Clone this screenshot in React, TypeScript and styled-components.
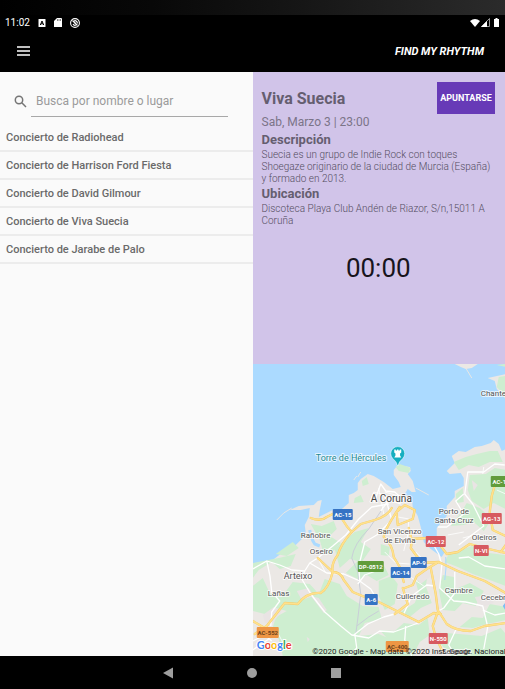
import React from 'react';
import styled, { createGlobalStyle } from 'styled-components';

const GlobalStyle = createGlobalStyle`
  * { box-sizing: border-box; }
  body { margin: 0; background: #000; font-family: Roboto, "Noto Sans", sans-serif; }
  h1, h2, p, ul { margin: 0; padding: 0; }
  button { font-family: inherit; border: 0; padding: 0; cursor: pointer; }
  svg { display: block; }
`;

const Screen = styled.div`
  display: flex;
  flex-direction: column;
  min-height: 100vh;
  background: #000;
`;

const TopEdge = styled.div`
  height: 15px;
  background: linear-gradient(90deg, #000 0%, #080808 30%, #161616 60%, #2b2b2b 100%);
`;

const StatusBar = styled.div`
  display: flex;
  align-items: center;
  justify-content: space-between;
  height: 15px;
  padding: 0 4px 0 5px;
  color: #fff;
`;

const StatusGroup = styled.div<{ $gap: number }>`
  display: flex;
  align-items: center;
  gap: ${(p) => p.$gap}px;
`;

const Clock = styled.time`
  font-size: 10px;
  line-height: 15px;
`;

const AppBar = styled.header`
  display: flex;
  align-items: center;
  justify-content: space-between;
  height: 42px;
  padding: 0 21px 0 16px;
`;

const IconButton = styled.button`
  background: none;
  color: #fff;
`;

const Brand = styled.a`
  color: #fff;
  font-size: 11px;
  font-weight: 700;
  font-style: italic;
  text-decoration: none;
`;

const Panes = styled.main`
  flex: 1;
  display: grid;
  grid-template-columns: 1fr 1fr;
`;

const ListPane = styled.section`
  background: #fafafa;
`;

const SearchForm = styled.form`
  display: flex;
  align-items: center;
  gap: 4px;
  height: 52px;
  padding: 6px 25px 0 14px;
`;

const SearchLabel = styled.label`
  flex: none;
  color: #757575;
`;

const SearchInput = styled.input`
  flex: 1;
  min-width: 0;
  height: 31px;
  padding: 0 5px;
  border: 0;
  border-bottom: 1px solid #a8a8a8;
  background: transparent;
  font-family: inherit;
  font-size: 12px;
  color: #333;
  outline: 0;
  &::placeholder { color: #9b9b9b; opacity: 1; }
`;

const ConcertList = styled.ul`
  list-style: none;
`;

const Concert = styled.li`
  height: 28px;
  padding: 0 6px;
  border-bottom: 2px solid #ececec;
  color: #6a6a6a;
  font-size: 11px;
  font-weight: 500;
  line-height: 28px;
`;

const DetailPane = styled.section`
  display: grid;
  grid-template-rows: minmax(0, 1fr) minmax(0, 1fr);
`;

const Info = styled.article`
  padding: 10px 10px 10px 9px;
  background: #d1c4e9;
  color: #544d5f;
`;

const TitleRow = styled.div`
  display: flex;
  align-items: center;
  justify-content: space-between;
`;

const Title = styled.h1`
  color: #655e70;
  font-size: 16px;
  font-weight: 700;
`;

const JoinButton = styled.button`
  width: 58px;
  height: 32px;
  background: #673ab7;
  color: #fff;
  font-size: 9px;
  font-weight: 700;
`;

const When = styled.p`
  color: #7b7488;
  font-size: 12px;
  line-height: 17px;
`;

const Subtitle = styled.h2`
  color: #655e70;
  font-size: 13px;
  font-weight: 700;
  line-height: 17px;
`;

const Copy = styled.p`
  padding-top: 1px;
  font-size: 10px;
  font-weight: 300;
  line-height: 12px;
`;

const Timer = styled.p`
  margin-top: 26px;
  color: #17141c;
  font-size: 26px;
  line-height: 30px;
  text-align: center;
`;

const MapCanvas = styled.svg`
  width: 100%;
  height: 0;
  min-height: 100%;
  background: #abdaff;
`;

const NavBar = styled.nav`
  display: flex;
  align-items: center;
  justify-content: center;
  gap: 72px;
  height: 33px;
  padding-right: 2px;
  color: #9e9e9e;
`;

const concerts = [
  'Concierto de Radiohead',
  'Concierto de Harrison Ford Fiesta',
  'Concierto de David Gilmour',
  'Concierto de Viva Suecia',
  'Concierto de Jarabe de Palo',
];

type Place = { x: number; y: number; text: string; size?: number; color?: string };

const places: Place[] = [
  { x: 63, y: 97, text: 'Torre de Hércules', size: 9, color: '#1f8a93' },
  { x: 118, y: 138, text: 'A Coruña', size: 10, color: '#444' },
  { x: 228, y: 32, text: 'Chanteiro' },
  { x: 48, y: 174, text: 'Rañobre' },
  { x: 57, y: 190, text: 'Oseiro' },
  { x: 31, y: 215, text: 'Arteixo', size: 9 },
  { x: 15, y: 232, text: 'Lañas' },
  { x: 125, y: 170, text: 'San Vicenzo' },
  { x: 131, y: 179, text: 'de Elviña' },
  { x: 186, y: 150, text: 'Porto de' },
  { x: 182, y: 159, text: 'Santa Cruz' },
  { x: 219, y: 176, text: 'Oleiros' },
  { x: 192, y: 229, text: 'Cambre' },
  { x: 228, y: 236, text: 'Cecebre' },
  { x: 143, y: 235, text: 'Culleredo' },
  { x: 189, y: 290, text: 'Sergude' },
];

type Shield = { x: number; y: number; w: number; text: string; fill: string; color?: string };

const shields: Shield[] = [
  { x: 80, y: 145, w: 20, text: 'AC-15', fill: '#3573c4' },
  { x: 238, y: 112, w: 24, text: 'AC-161', fill: '#619c3b' },
  { x: 229, y: 149, w: 20, text: 'AG-13', fill: '#d75a60' },
  { x: 173, y: 172, w: 20, text: 'AC-12', fill: '#d75a60' },
  { x: 221, y: 181, w: 15, text: 'N-VI', fill: '#d75a60' },
  { x: 158, y: 193, w: 16, text: 'AP-9', fill: '#3573c4' },
  { x: 138, y: 203, w: 20, text: 'AC-14', fill: '#3573c4' },
  { x: 105, y: 197, w: 26, text: 'DP-0512', fill: '#619c3b' },
  { x: 112, y: 230, w: 13, text: 'A-6', fill: '#3573c4' },
  { x: 176, y: 269, w: 19, text: 'N-550', fill: '#d75a60' },
  { x: 4, y: 263, w: 22, text: 'AC-552', fill: '#ee9644', color: '#6b431c' },
  { x: 133, y: 277, w: 23, text: 'AC-400', fill: '#ee9644', color: '#6b431c' },
];

const mainRoads = [
  'M58 154 Q68 158 74 153 L82 149',
  'M90 156 Q94 163 99 168 Q88 180 85 191 Q78 200 80 208 Q76 224 68 229 Q54 228 45 240 L32 239 L14 262 L2 270',
  'M0 257 L12 264',
  'M65 194 L80 208 Q88 208 91 216 L100 228 L112 233 L126 238 L146 248 L166 258 L181 249 L188 250',
  'M99 168 L108 160 L122 156 Q135 152 139 144',
  'M145 147 L152 141 L162 146 L160 155 L145 161 L144 150',
  'M147 143 Q132 165 131 173 Q140 181 141 193 L147 203 L151 218',
  'M156 164 Q160 177 158 184 L169 199 L186 198 L205 207 L232 217 L253 229',
  'M152 224 L160 221 L164 212 L174 205 L184 199',
  'M150 224 L155 240 L142 250',
  'M178 204 L183 230 L185 246 L194 260 Q203 267 218 267 L232 262 L253 259',
  'M185 248 L180 262 L183 273 L190 288',
  'M184 177 L194 190 L205 188 L217 180 L232 184 L253 189',
  'M244 114 L239 132 L237 148 L240 166 L253 172',
  'M158 175 L174 174 L186 179',
  'M248 188 L253 181',
];

const minorRoads = [
  'M0 205 L14 197 L27 201 L39 206 L52 207 L57 199 L65 194 L80 182 L93 171 L106 155 L119 143 L136 140',
  'M14 197 Q18 212 19 228 L27 237 L19 248 L18 262',
  'M52 207 L49 215 L58 230 L72 248 L88 262 L99 271 L116 274 L127 267 L141 268 L168 258',
  'M57 199 L74 209 L91 210 L107 217 L118 225 L125 237',
  'M107 217 L106 202 L112 178 L124 171',
  'M126 206 L112 211 L105 220',
  'M102 270 L104 284 L96 292',
  'M252 101 L242 100 L231 108 L215 108 L212 130 L220 140 L231 162 L219 171 L206 181',
  'M211 130 L203 137 L211 150 L194 163 L185 163',
  'M178 176 L186 190 L189 201 L187 224 L201 237 L213 238 L230 242 L235 263 L231 285',
  'M202 208 L202 229 L191 244 L184 248',
  'M253 205 L232 202 L216 193 L206 194',
  'M203 266 L196 281 L203 292',
  'M151 250 L159 232 L174 221 L182 222',
  'M142 250 L131 253 L115 260 L101 271',
  'M153 262 L152 276 L159 292',
  'M121 139 L128 120 L133 127 L142 128 L151 136',
  'M128 147 L136 136 L148 140 M132 131 L139 156 L124 171',
  'M230 246 L242 251 L253 249',
  'M0 277 L12 271 L19 277 M0 286 L16 275',
];

const woods = [
  'M0 199 L26 194 L43 190 L38 202 L27 205 L19 198 L6 206 L0 214 Z',
  'M23 190 L40 178 L46 184 L34 192 Z',
  'M0 222 L10 214 L17 229 L29 233 L40 218 L57 220 L66 230 L72 215 L87 220 L94 232 L110 242 L126 243 L129 255 L112 259 L106 272 L126 270 L140 276 L150 292 L30 292 L26 275 L19 267 L23 253 L34 247 L23 244 L12 250 L0 247 Z',
  'M58 160 L69 162 L81 157 L84 165 L77 172 L88 179 L78 190 L71 190 L67 176 Z',
  'M82 185 L102 168 L116 164 L108 178 L118 185 L109 198 L97 195 L87 204 Z',
  'M93 209 L105 197 L129 197 L136 211 L124 217 L114 211 L107 216 Z',
  'M213 93 L224 90 L237 87 L245 87 L250 98 L237 98 L226 103 L216 101 L206 106 L201 98 Z',
  'M217 111 L233 110 L242 104 L253 106 L253 145 L241 139 L231 145 L219 137 L215 126 Z',
  'M203 130 L210 124 L211 138 L204 139 Z',
  'M214 139 L227 144 L239 155 L231 167 L221 158 L211 161 L198 162 L208 149 Z',
  'M206 187 L219 182 L236 189 L253 191 L253 222 L237 216 L220 210 L205 203 L192 198 L196 190 Z',
  'M163 218 L175 210 L173 222 L179 239 L168 244 L157 253 L148 248 L162 239 L166 229 Z',
  'M190 211 L201 213 L203 225 L217 219 L231 227 L223 242 L210 239 L202 247 L190 246 L186 226 Z',
  'M237 240 L253 243 L253 256 L234 260 L220 264 L207 263 L219 253 L230 254 Z',
  'M193 269 L206 270 L229 272 L248 264 L253 270 L253 292 L199 292 L188 280 Z',
  'M127 266 L142 267 L151 259 L166 261 L175 254 L177 271 L167 278 L160 292 L150 292 Z',
  'M126 217 L139 212 L145 220 L142 240 L132 246 L126 232 Z',
  'M128 180 L137 183 L136 192 L128 191 Z',
];

function CityMap() {
  return (
    <MapCanvas viewBox="0 0 253 292" preserveAspectRatio="xMidYMid slice" role="img" aria-label="Mapa de A Coruña">
      <rect width="253" height="292" fill="#abdaff" />
      <path
        fill="#ebe8e5"
        d="M0 199 L12 199 L20 196 L29 189 L35 185 L43 181 L49 175 L53 169 L52 161 L56 153 L57 144 L48 146 L37 146 L46 142 L61 141 L65 137 L69 136 L67 146 L66 153 L74 149 L80 146 L88 146 L96 139 L96 131 L101 129 L105 126 L105 119 L108 115 L115 110 L121 112 L126 115 L131 118 L140 125 L148 123 L146 118 L141 111 L141 106 L145 101 L157 103 L158 107 L155 110 L160 117 L163 128 L159 128 L155 125 L152 130 L159 134 L160 143 L165 152 L168 163 L170 173 L171 178 L178 185 L189 193 L192 188 L188 182 L193 177 L184 173 L184 164 L189 158 L194 152 L194 142 L202 133 L202 127 L211 122 L211 114 L208 109 L197 110 L194 107 L202 99 L199 92 L206 87 L213 88 L222 83 L229 82 L238 79 L241 76 L246 80 L249 87 L253 85 L253 292 L0 292 Z"
      />
      <path fill="#ebe8e5" d="M202 0 L225 0 L219 4 L213 5 L208 3 Z M253 10 L235 14 L242 17 L244 25 L249 30 L253 35 Z" />
      <g fill="#ceeed0">
        {woods.map((d) => <path key={d} d={d} />)}
        <path d="M143 103 L147 100 L158 104 L156 109 L146 107 Z M109 117 L114 113 L116 120 L110 122 Z M102 134 L108 131 L111 138 L101 139 Z M244 1 L253 0 L253 3 Z M246 13 L253 12 L253 36 L249 28 L244 23 Z" />
      </g>
      <g fill="#e9e4e4">
        <path d="M10 251 L21 243 L29 247 L20 259 L12 259 Z M44 227 L56 224 L61 232 L49 236 Z M58 232 L66 234 L74 246 L71 249 Z M54 273 L57 275 L55 278 Z" />
        <path d="M165 203 L174 201 L178 212 L168 220 L162 212 Z M222 233 L237 231 L241 239 L227 244 Z M219 116 L225 121 L221 127 Z M176 266 L188 267 L190 275 L176 274 Z" />
      </g>
      <path d="M57 166 Q58 174 62 180 L67 182" fill="none" stroke="#abdaff" strokeWidth="3" />
      <path d="M193 193 Q194 203 192 216" fill="none" stroke="#abdaff" strokeWidth="1" />
      <path d="M253 238 L250 242 L253 247 Z" fill="#7abef5" />
      <g fill="none" stroke="#e9e7e4" strokeWidth="1">
        <path d="M24 156 L31 149 L39 144 M163 124 L176 131 M213 4 L219 14 M101 116 L104 112 M105 113 L108 108" />
      </g>
      <path d="M131 143 L116 165 Q101 180 99 194 L105 208 L108 230 L105 255 L103 270 M104 262 Q116 252 126 247" fill="none" stroke="#c9ced8" strokeWidth="1" />
      <g fill="none" stroke="#fff" strokeLinejoin="round">
        {minorRoads.map((d) => <path key={d} d={d} strokeWidth="1.3" />)}
        <path strokeWidth="0.800" d="M117 138 L121 128 L129 130 M126 124 L131 150 M132 128 L153 134 M140 152 L156 155 L155 173 M143 165 L155 171 L151 187 M132 188 L143 199 L157 200 M149 207 L171 222 M163 188 L175 200 M23 265 L34 286 M73 209 L66 196 M230 110 L231 103 M244 126 L253 130 M210 174 L226 170 L233 175 M195 171 L211 168" />
      </g>
      <g fill="none" strokeLinejoin="round" strokeLinecap="round">
        {mainRoads.map((d) => <path key={d} d={d} stroke="#f3cb69" strokeWidth="2.300" />)}
        {mainRoads.map((d) => <path key={`${d}c`} d={d} stroke="#ffe18c" strokeWidth="1.600" />)}
      </g>
      <g fontFamily="Roboto, sans-serif" stroke="#fff" strokeWidth="2" strokeLinejoin="round" paintOrder="stroke">
        {places.map((p) => (
          <text key={p.text} x={p.x} y={p.y} fontSize={p.size ?? 8} fill={p.color ?? '#555'} strokeOpacity="0.7">
            {p.text}
          </text>
        ))}
      </g>
      <g fontFamily="Roboto, sans-serif" fontSize="6" fontWeight="700" textAnchor="middle">
        {shields.map((s) => (
          <React.Fragment key={s.text}>
            <rect x={s.x} y={s.y} width={s.w} height="11" rx="1" fill={s.fill} />
            <text x={s.x + s.w / 2} y={s.y + 8} fill={s.color ?? '#fff'}>{s.text}</text>
          </React.Fragment>
        ))}
      </g>
      <path d="M145 102 Q143.500 97 140 94.500 A7 7 0 1 1 150 94.500 Q146.500 97 145 102 Z" fill="#16aec0" stroke="#fff" strokeWidth="0.500" />
      <path d="M141.500 85.500 H143 V86.500 H144.300 V85.500 H145.700 V86.500 H147 V85.500 H148.500 V88.500 L147.300 89.500 V91.500 L148.500 93.500 H141.500 L142.700 91.500 V89.500 L141.500 88.500 Z" fill="#fff" />
      <text x="4" y="285" fontFamily="Lato, sans-serif" fontSize="11" fontWeight="700" stroke="#fff" strokeWidth="2" paintOrder="stroke">
        <tspan fill="#4285f4">G</tspan><tspan fill="#ea4335">o</tspan><tspan fill="#fbbc05">o</tspan><tspan fill="#4285f4">g</tspan><tspan fill="#34a853">l</tspan><tspan fill="#ea4335">e</tspan>
      </text>
      <text x="253" y="290" textAnchor="end" fontFamily="Roboto, sans-serif" fontSize="8" fill="#222">
        ©2020 Google - Map data ©2020 Inst. Geogr. Nacional
      </text>
    </MapCanvas>
  );
}

export default function App() {
  return (
    <>
      <GlobalStyle />
      <Screen>
        <TopEdge />
        <StatusBar>
          <StatusGroup $gap={8}>
            <Clock>11:02</Clock>
            <svg width="8" height="8" viewBox="0 0 8 8">
              <rect x="0.500" width="7" height="8" rx="0.500" fill="#fff" />
              <path d="M2.300 6 L4 2 L5.700 6 M3 4.800 H5" stroke="#000" strokeWidth="1" fill="none" />
            </svg>
            <svg width="8" height="9" viewBox="0 0 8 9">
              <path d="M3 0 H7 Q8 0 8 1 V9 H0 V3 Z" fill="#fff" />
              <path d="M3.500 1 V3 M5 1 V3 M6.500 1 V3" stroke="#555" strokeWidth="0.700" />
            </svg>
            <svg width="10" height="10" viewBox="0 0 10 10" fill="none" stroke="#fff">
              <circle cx="5" cy="5" r="4.400" strokeWidth="1.100" />
              <path d="M2.500 2.500 L7.500 7.500 M3 6 A2.300 2.300 0 0 0 6 7 M4 3 A2.300 2.300 0 0 1 7.300 5.500 M4 5 H6" strokeWidth="1.200" />
            </svg>
          </StatusGroup>
          <StatusGroup $gap={1}>
            <svg width="10" height="8" viewBox="0 0 10 8"><path d="M0 2 Q5 -2 10 2 L5 8 Z" fill="#fff" /></svg>
            <svg width="9" height="9" viewBox="0 0 9 9">
              <path d="M0.500 8.500 L8.500 0.500 V8.500 Z" fill="none" stroke="#bbb" strokeWidth="0.800" />
              <path d="M0 9 L6 3 V9 Z" fill="#fff" />
            </svg>
            <svg width="10" height="9" viewBox="0 0 10 9"><path d="M3 1 H4.500 V0 H6.500 V1 H8 V9 H3 Z" fill="#fff" /></svg>
          </StatusGroup>
        </StatusBar>
        <AppBar>
          <IconButton type="button" aria-label="Menú">
            <svg width="14" height="10" viewBox="0 0 14 10"><path d="M1 1 H14 M1 5 H14 M1 9 H14" stroke="currentColor" strokeWidth="1.400" /></svg>
          </IconButton>
          <Brand href="#">FIND MY RHYTHM</Brand>
        </AppBar>
        <Panes>
          <ListPane>
            <SearchForm role="search" onSubmit={(e) => e.preventDefault()}>
              <SearchLabel htmlFor="search" aria-label="Buscar">
                <svg width="13" height="13" viewBox="0 0 13 13" fill="none" stroke="currentColor" strokeWidth="1.500">
                  <circle cx="5" cy="5" r="3.700" /><path d="M7.800 7.800 L12 12" />
                </svg>
              </SearchLabel>
              <SearchInput id="search" type="text" placeholder="Busca por nombre o lugar" />
            </SearchForm>
            <ConcertList>
              {concerts.map((name) => <Concert key={name}>{name}</Concert>)}
            </ConcertList>
          </ListPane>
          <DetailPane>
            <Info>
              <TitleRow>
                <Title>Viva Suecia</Title>
                <JoinButton type="button">APUNTARSE</JoinButton>
              </TitleRow>
              <When>Sab, Marzo 3 | 23:00</When>
              <Subtitle>Descripción</Subtitle>
              <Copy>
                Suecia es un grupo de Indie Rock con toques Shoegaze originario de la ciudad de Murcia (España) y
                formado en 2013.
              </Copy>
              <Subtitle>Ubicación</Subtitle>
              <Copy>Discoteca Playa Club Andén de Riazor, S/n,15011 A Coruña</Copy>
              <Timer>00:00</Timer>
            </Info>
            <CityMap />
          </DetailPane>
        </Panes>
        <NavBar>
          <IconButton type="button" aria-label="Atrás">
            <svg width="12" height="12" viewBox="0 0 12 12"><path d="M1 6 L11 0.500 V11.500 Z" fill="#9e9e9e" /></svg>
          </IconButton>
          <IconButton type="button" aria-label="Inicio">
            <svg width="12" height="12" viewBox="0 0 12 12"><circle cx="6" cy="6" r="5" fill="#9e9e9e" /></svg>
          </IconButton>
          <IconButton type="button" aria-label="Recientes">
            <svg width="12" height="12" viewBox="0 0 12 12"><rect x="1" y="1" width="10" height="10" fill="#9e9e9e" /></svg>
          </IconButton>
        </NavBar>
      </Screen>
    </>
  );
}
